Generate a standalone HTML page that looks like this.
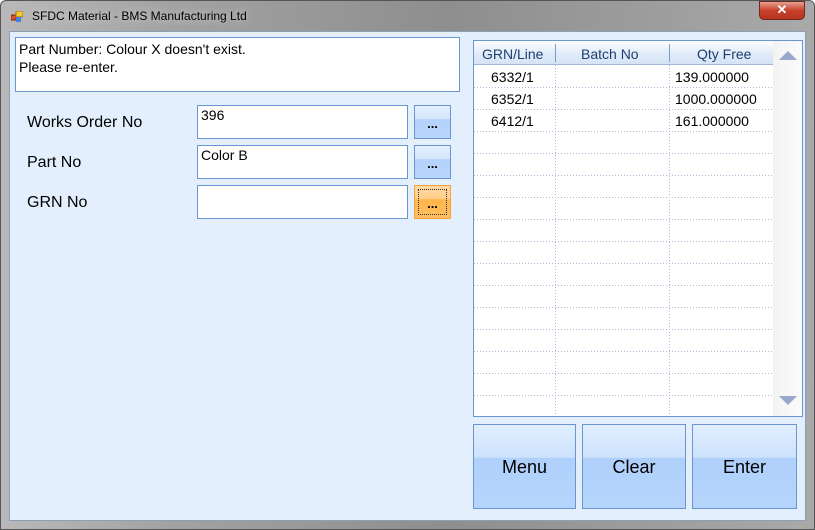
<!DOCTYPE html>
<html><head><meta charset="utf-8"><style>
*{box-sizing:border-box;margin:0;padding:0}
body{width:815px;height:530px;overflow:hidden;font-family:"Liberation Sans",sans-serif;background:#fff;position:relative}
#frame{position:absolute;left:0;top:0;width:815px;height:530px;border-radius:6px 6px 0 0;background:linear-gradient(90deg,#b9b9b9 0%,#a3a3a3 20%,#8e8e8e 55%,#a9a9a9 100%);border:1px solid #555}
#title{position:absolute;left:32px;top:9px;font-size:12px;color:#000;text-shadow:0 0 8px #ddd}
#icon{position:absolute;left:11px;top:11px;width:12px;height:11px}
#close{position:absolute;left:759px;top:1px;width:46px;height:19px;border-radius:0 0 5px 5px;background:linear-gradient(#e8a090,#c8412a 50%,#b8331f);border:1px solid #6e2a20;color:#fff;font-weight:bold;font-size:13px;text-align:center;line-height:16px}
#client{position:absolute;left:9px;top:31px;width:797px;height:490px;background:#e3effd;border:1px solid #8aa0b8}
.abs{position:absolute}
.tb{position:absolute;background:#fff;border:1px solid #6a95cf;font-size:14px;padding:1px 3px}
.lbl{position:absolute;font-size:16px;color:#000}
.db{position:absolute;width:37px;height:34px;border:1px solid #6a95cf;background:linear-gradient(#e4efff 0%,#d4e5fc 40%,#b3d2fb 42%,#b8d6fc 100%);font-size:13px;font-weight:bold;text-align:center;line-height:36px}
.db.or{border-color:#f2a33c;background:linear-gradient(#ffd9a3 0%,#ffcf8c 40%,#ffb54b 42%,#ffbf60 100%)}
.big{position:absolute;top:424px;height:85px;border:1px solid #6a95cf;background:linear-gradient(#e1eeff 0%,#cde2fd 39%,#aed0fb 40%,#b6d5fc 100%);font-size:18px;text-align:center;line-height:84px}
table{border-collapse:collapse;font-size:14px}
</style></head><body>
<div id="frame"></div>
<svg id="icon" viewBox="0 0 12 11"><rect x="0" y="4" width="5" height="5" fill="#e05030" stroke="#802010" stroke-width="1"/><rect x="5" y="0" width="7" height="6" fill="#f8c830" stroke="#a07010" stroke-width="1"/><rect x="5" y="6" width="5" height="5" fill="#4080e0"/></svg>
<div id="title">SFDC Material - BMS Manufacturing Ltd</div>
<div id="close">✕</div>
<div id="client"></div>
<div class="tb" style="left:15px;top:37px;width:445px;height:55px;padding:2px 3px;line-height:18px">Part Number: Colour X doesn't exist.<br>Please re-enter.</div>
<div class="lbl" style="left:27px;top:114px">Works Order No</div>
<div class="lbl" style="left:27px;top:154px">Part No</div>
<div class="lbl" style="left:27px;top:194px">GRN No</div>
<div class="tb" style="left:197px;top:105px;width:211px;height:34px">396</div>
<div class="tb" style="left:197px;top:145px;width:211px;height:34px">Color B</div>
<div class="tb" style="left:197px;top:185px;width:211px;height:34px"></div>
<div class="db" style="left:414px;top:105px">...</div>
<div class="db" style="left:414px;top:145px">...</div>
<div class="db or" style="left:414px;top:185px"><div style="position:absolute;left:3px;top:3px;right:3px;bottom:3px;border:1px dotted #333"></div>...</div>
<div class="abs" style="left:473px;top:40px;width:330px;height:377px;background:#fff;border:1px solid #6a95cf;overflow:hidden">
<div class="abs" style="left:0;top:0;width:299px;height:24px;background:linear-gradient(#fff,#e3edfa 50%,#d5e3f5);border-bottom:1px solid #9fb8d8"></div>
<div class="abs" style="left:81px;top:3px;width:1px;height:18px;background:#7a9cc8"></div>
<div class="abs" style="left:195px;top:3px;width:1px;height:18px;background:#7a9cc8"></div>
<div class="abs" style="left:8px;top:5px;font-size:14px;color:#1f3f6f">GRN/Line</div>
<div class="abs" style="left:107px;top:5px;font-size:14px;color:#1f3f6f">Batch No</div>
<div class="abs" style="left:223px;top:5px;font-size:14px;color:#1f3f6f">Qty Free</div>
<svg class="abs" style="left:0;top:24px" width="299" height="352">
<g stroke="#a8bcd8" stroke-dasharray="1,2" stroke-width="1">
<line x1="81.5" y1="0" x2="81.5" y2="352"/><line x1="195.5" y1="0" x2="195.5" y2="352"/>
<line x1="0" y1="22.5" x2="299" y2="22.5"/><line x1="0" y1="44.5" x2="299" y2="44.5"/><line x1="0" y1="66.5" x2="299" y2="66.5"/><line x1="0" y1="88.5" x2="299" y2="88.5"/><line x1="0" y1="110.5" x2="299" y2="110.5"/><line x1="0" y1="132.5" x2="299" y2="132.5"/><line x1="0" y1="154.5" x2="299" y2="154.5"/><line x1="0" y1="176.5" x2="299" y2="176.5"/><line x1="0" y1="198.5" x2="299" y2="198.5"/><line x1="0" y1="220.5" x2="299" y2="220.5"/><line x1="0" y1="242.5" x2="299" y2="242.5"/><line x1="0" y1="264.5" x2="299" y2="264.5"/><line x1="0" y1="286.5" x2="299" y2="286.5"/><line x1="0" y1="308.5" x2="299" y2="308.5"/><line x1="0" y1="330.5" x2="299" y2="330.5"/>
</g></svg>
<div class="abs" style="left:17px;top:28px;font-size:14px">6332/1</div>
<div class="abs" style="left:17px;top:50px;font-size:14px">6352/1</div>
<div class="abs" style="left:17px;top:72px;font-size:14px">6412/1</div>
<div class="abs" style="left:201px;top:28px;font-size:14px">139.000000</div>
<div class="abs" style="left:201px;top:50px;font-size:14px">1000.000000</div>
<div class="abs" style="left:201px;top:72px;font-size:14px">161.000000</div>
<div class="abs" style="left:299px;top:0;width:30px;height:376px;background:linear-gradient(90deg,#f3f3f3,#fbfbfb)"></div>
<svg class="abs" style="left:305px;top:10px" width="18" height="10"><polygon points="0,9 9,0 18,9" fill="#98a8cc"/></svg>
<svg class="abs" style="left:305px;top:355px" width="18" height="10"><polygon points="0,0 18,0 9,9" fill="#98a8cc"/></svg>
</div>
<div class="big" style="left:473px;width:103px">Menu</div>
<div class="big" style="left:582px;width:104px">Clear</div>
<div class="big" style="left:692px;width:105px">Enter</div>
</body></html>
